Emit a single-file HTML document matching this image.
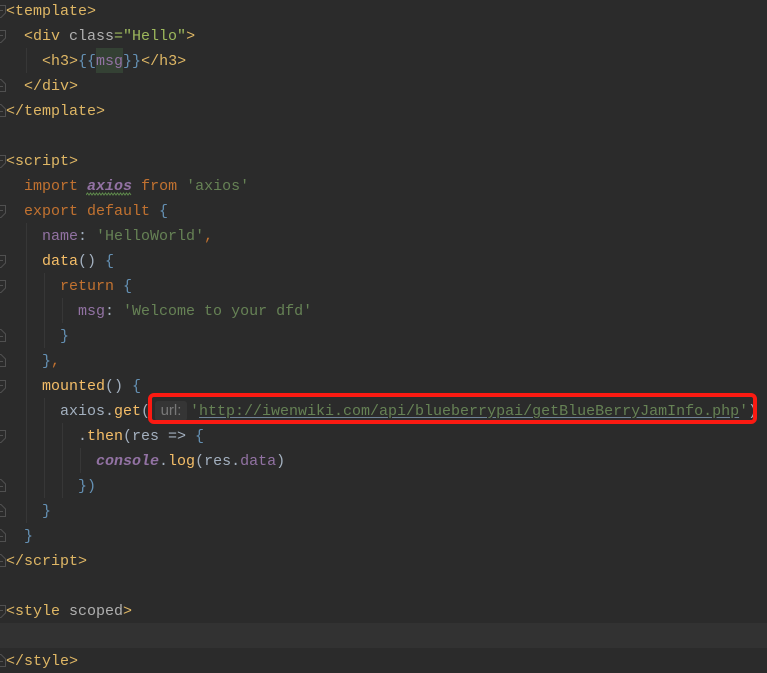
<!DOCTYPE html>
<html>
<head>
<meta charset="utf-8">
<style>
html,body{margin:0;padding:0;background:#2b2b2b;}
#p{position:relative;width:767px;height:673px;overflow:hidden;background:#2b2b2b;font-family:"Liberation Mono",monospace;font-size:15px;color:#a3b0bf;}
.l{position:absolute;left:6px;height:25px;line-height:25px;white-space:pre;margin-top:1px;}
.g{position:absolute;width:1px;background:#373737;}
.t{color:#dfb765}.a{color:#b0b0b0}.s{color:#9db85c}.b{color:#6490b3}.k{color:#c27230}.n{color:#668255}.v{color:#9272a3}.f{color:#f5be68}
.i{font-style:italic;font-weight:bold;color:#9272a3}
.u{text-decoration:underline;text-decoration-color:#6f8296;text-underline-offset:2px}
</style>
</head>
<body>
<div id="p">
<div style="position:absolute;left:0;top:623px;width:767px;height:25px;background:#323232"></div>
<div style="position:absolute;left:96px;top:48px;width:27px;height:25px;background:#344134"></div>

<div class="g" style="left:26px;top:48px;height:25px"></div>
<div class="g" style="left:26px;top:223px;height:300px"></div>
<div class="g" style="left:44px;top:273px;height:75px"></div>
<div class="g" style="left:44px;top:398px;height:100px"></div>
<div class="g" style="left:62px;top:298px;height:25px"></div>
<div class="g" style="left:62px;top:423px;height:75px"></div>
<div class="g" style="left:80px;top:448px;height:25px"></div>

<svg width="8" height="673" style="position:absolute;left:0;top:0" fill="none" stroke="#505050" stroke-width="1">
<path d="M-5 5.500H5.500V13L1 17.500H-5M-1 10.500H3"/>
<path d="M-5 30.500H5.500V38L1 42.500H-5M-1 35.500H3"/>
<path d="M-5 155.500H5.500V163L1 167.500H-5M-1 160.500H3"/>
<path d="M-5 205.500H5.500V213L1 217.500H-5M-1 210.500H3"/>
<path d="M-5 255.500H5.500V263L1 267.500H-5M-1 260.500H3"/>
<path d="M-5 280.500H5.500V288L1 292.500H-5M-1 285.500H3"/>
<path d="M-5 380.500H5.500V388L1 392.500H-5M-1 385.500H3"/>
<path d="M-5 430.500H5.500V438L1 442.500H-5M-1 435.500H3"/>
<path d="M-5 605.500H5.500V613L1 617.500H-5M-1 610.500H3"/>
<g transform="translate(0,-1)">
<path d="M-5 92.500H5.500V85L1 80.500H-5M-1 87.500H3"/>
<path d="M-5 117.500H5.500V110L1 105.500H-5M-1 112.500H3"/>
<path d="M-5 342.500H5.500V335L1 330.500H-5M-1 337.500H3"/>
<path d="M-5 367.500H5.500V360L1 355.500H-5M-1 362.500H3"/>
<path d="M-5 492.500H5.500V485L1 480.500H-5M-1 487.500H3"/>
<path d="M-5 517.500H5.500V510L1 505.500H-5M-1 512.500H3"/>
<path d="M-5 542.500H5.500V535L1 530.500H-5M-1 537.500H3"/>
<path d="M-5 567.500H5.500V560L1 555.500H-5M-1 562.500H3"/>
<path d="M-5 667.500H5.500V660L1 655.500H-5M-1 662.500H3"/>
</g>
</svg>

<svg width="46" height="5" style="position:absolute;left:86px;top:192px" fill="none" stroke="#5f8a4c" stroke-width="1"><path d="M0 3L1.500 1L3 3L4.500 1L6 3L7.500 1L9 3L10.500 1L12 3L13.500 1L15 3L16.500 1L18 3L19.500 1L21 3L22.500 1L24 3L25.500 1L27 3L28.500 1L30 3L31.500 1L33 3L34.500 1L36 3L37.500 1L39 3L40.500 1L42 3L43.500 1L45 3"/></svg>

<div class="l t" style="top:-2px">&lt;template&gt;</div>
<div class="l" style="top:23px"><span class="t">  &lt;div</span> <span class="a">class</span><span class="s">="Hello"</span><span class="t">&gt;</span></div>
<div class="l" style="top:48px"><span class="t">    &lt;h3&gt;</span><span class="b">{{</span><span class="v">msg</span><span class="b">}}</span><span class="t">&lt;/h3&gt;</span></div>
<div class="l t" style="top:73px">  &lt;/div&gt;</div>
<div class="l t" style="top:98px">&lt;/template&gt;</div>
<div class="l t" style="top:148px">&lt;script&gt;</div>
<div class="l" style="top:173px"><span class="k">  import</span> <span class="i">axios</span> <span class="k">from</span> <span class="n">'axios'</span></div>
<div class="l" style="top:198px"><span class="k">  export default</span> <span class="b">{</span></div>
<div class="l" style="top:223px">    <span class="v">name</span>: <span class="n">'HelloWorld'</span><span class="k">,</span></div>
<div class="l" style="top:248px">    <span class="f">data</span>() <span class="b">{</span></div>
<div class="l" style="top:273px"><span class="k">      return</span> <span class="b">{</span></div>
<div class="l" style="top:298px">        <span class="v">msg</span>: <span class="n">'Welcome to your dfd'</span></div>
<div class="l b" style="top:323px">      }</div>
<div class="l" style="top:348px"><span class="b">    }</span><span class="k">,</span></div>
<div class="l" style="top:373px">    <span class="f">mounted</span>() <span class="b">{</span></div>
<div class="l" style="top:398px">      axios.<span class="f">get</span>(</div>
<div style="position:absolute;left:155px;top:401px;width:32px;height:20px;background:#353535;border-radius:3px;color:#787878;font:15px/20px 'Liberation Sans',sans-serif;text-align:center">url:</div>
<div class="l" style="top:398px;left:190px;color:#668255"><span>'</span><span class="u">http://iwenwiki.com/api/blueberrypai/getBlueBerryJamInfo.php</span><span>'</span><span style="color:#a3b0bf">)</span></div>
<div style="position:absolute;left:148px;top:393px;width:601px;height:23px;border:4px solid #fb1a12;border-radius:6px"></div>
<div class="l" style="top:423px">        .<span class="f">then</span>(res =&gt; <span class="b">{</span></div>
<div class="l" style="top:448px">          <span class="i">console</span>.<span class="f">log</span>(res.<span class="v">data</span>)</div>
<div class="l b" style="top:473px">        })</div>
<div class="l b" style="top:498px">    }</div>
<div class="l b" style="top:523px">  }</div>
<div class="l t" style="top:548px">&lt;/script&gt;</div>
<div class="l" style="top:598px"><span class="t">&lt;style</span> <span class="a">scoped</span><span class="t">&gt;</span></div>
<div class="l t" style="top:648px">&lt;/style&gt;</div>
</div>
</body>
</html>
